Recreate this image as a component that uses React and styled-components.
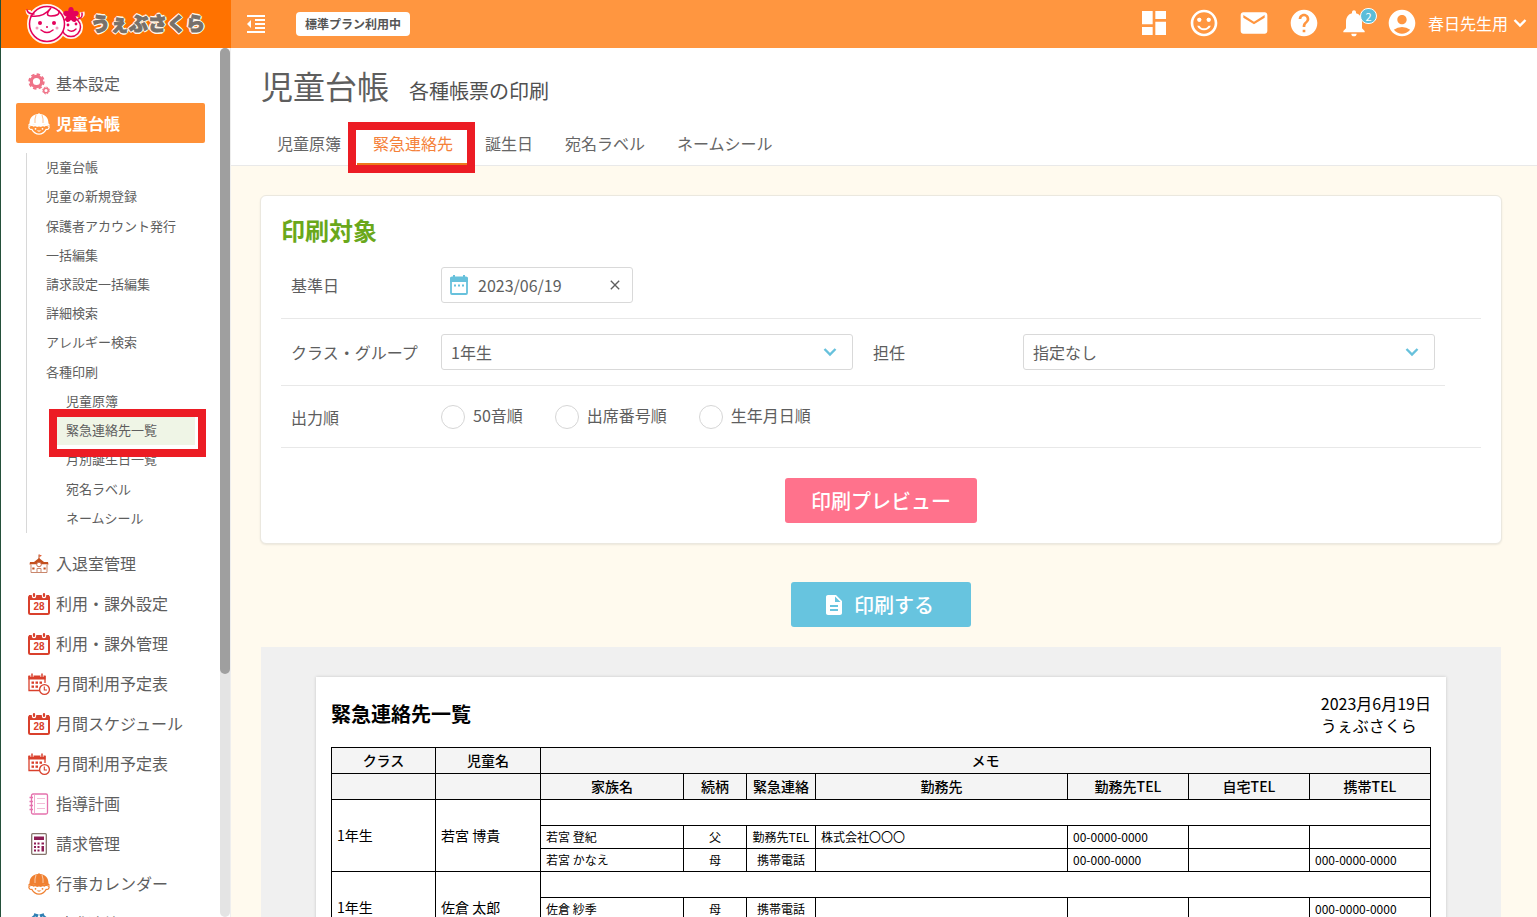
import React from "react";
import styled, { createGlobalStyle, css } from "styled-components";
import {
  MdDashboard,
  MdSentimentSatisfiedAlt,
  MdEmail,
  MdHelp,
  MdNotifications,
  MdAccountCircle,
  MdFormatIndentDecrease,
  MdDescription,
  MdClose,
} from "react-icons/md";

const GlobalStyle = createGlobalStyle`
  *, *::before, *::after { box-sizing: border-box; }
  body { margin: 0; background: #fffaee; }
  body, button, input, select {
    font-family: "Noto Sans CJK JP", "Noto Sans", sans-serif;
    color: #5e5e5e;
  }
  body { font-size: 16px; line-height: 24px; }
  h1, h2, h3, p, ul { margin: 0; padding: 0; }
  ul { list-style: none; }
  a { color: inherit; text-decoration: none; }
  button { border: 0; padding: 0; background: none; cursor: pointer; }
`;

/* ---------- shell ---------- */

const Shell = styled.div`
  display: grid;
  grid-template-columns: 230px minmax(0, 1fr);
  grid-template-rows: 48px minmax(0, 1fr);
  height: 100vh;
  overflow: hidden;
  border-left: 1px solid #24503a;
`;

const Brand = styled.a`
  display: flex;
  align-items: center;
  gap: 6px;
  padding: 0 0 2px 24px;
  background: #ff7200;
`;

const BrandName = styled.span`
  font-size: 19px;
  font-weight: 900;
  line-height: 24px;
  color: #77706a;
  white-space: nowrap;
  -webkit-text-stroke: 1px #77706a;
  text-shadow: 2px 0 #fff6e8, -2px 0 #fff6e8, 0 2px #fff6e8, 0 -2px #fff6e8,
    1px 1px #fff6e8, -1px 1px #fff6e8, 1px -1px #fff6e8, -1px -1px #fff6e8;
`;

const TopBar = styled.header`
  display: flex;
  align-items: center;
  padding: 0 10px 0 13px;
  background: #ff9640;
  color: #fff;
`;

const BarButton = styled.button`
  display: grid;
  place-items: center;
  position: relative;
  color: #fff;
  width: ${(p) => p.$width || 50}px;
  height: 46px;
`;

const PlanBadge = styled.span`
  margin-left: 28px;
  padding: 0 9px;
  border-radius: 4px;
  background: #fff;
  color: #555;
  font-size: 12px;
  font-weight: 700;
  line-height: 24px;
`;

const BarActions = styled.div`
  display: flex;
  align-items: center;
  margin-left: auto;
  padding-bottom: 2px;
`;

const Count = styled.span`
  position: absolute;
  top: 8px;
  right: 2px;
  width: 17px;
  height: 16px;
  border: 1px solid #fff;
  border-radius: 8px;
  background: #5bbdd9;
  font-size: 11px;
  line-height: 14px;
  text-align: center;
`;

const UserButton = styled.button`
  display: flex;
  align-items: center;
  gap: 5px;
  margin-left: 7px;
  color: #fff;
  font-size: 16px;
  line-height: 24px;
`;

const UserName = styled.span`
  padding-left: 5px;
`;

/* ---------- sidebar ---------- */

const Sidebar = styled.aside`
  display: flex;
  min-height: 0;
  border-right: 1px solid #eee;
  background: #fff;
`;

const Nav = styled.nav`
  flex: 1;
  overflow: hidden;
  padding: 15px 15px 0;
`;

const ScrollTrack = styled.div`
  width: 10px;
  border-radius: 5px;
  background: #e4e4e4;
`;

const ScrollThumb = styled.div`
  height: 72%;
  border-radius: 5px;
  background: #9f9f9f;
`;

const NavLink = styled.a`
  display: flex;
  align-items: center;
  gap: 6px;
  height: 40px;
  padding-left: 12px;
  border-radius: 2px;
  white-space: nowrap;
  ${(p) =>
    p.$active &&
    css`
      background: #ff9138;
      color: #fff;
      font-weight: 700;
    `}
  svg {
    flex: none;
    margin-top: 2px;
  }
`;

const SubMenu = styled.ul`
  display: grid;
  grid-auto-rows: 1fr;
  height: 380px;
  margin: 10px;
  border-left: 1px solid #d8d8d8;
`;

const SubItem = styled.li`
  position: relative;
  display: flex;
  align-items: center;
  margin-left: ${(p) => (p.$deep ? 29 : 19)}px;
  padding: 0 0 1px ${(p) => (p.$deep ? 10 : 0)}px;
  font-size: 13px;
  white-space: nowrap;
  background: ${(p) => (p.$current ? "#eff5e6" : "none")};
`;

const Marker = styled.span`
  position: absolute;
  z-index: 2;
  border: 8px solid #ec1c24;
  pointer-events: none;
  ${(p) =>
    p.$tab
      ? css`
          inset: 0 -6px -10px -9px;
        `
      : css`
          inset: -7px -11px -12px -7px;
          box-shadow: inset 0 -4px #fff, inset -3px 0 #fff;
        `}
`;

/* ---------- content ---------- */

const Content = styled.main`
  overflow: hidden;
  background: #fffaee;
`;

const PageHead = styled.div`
  padding: 13px 30px 0;
  border-bottom: 1px solid #e9e9e9;
  background: #fff;
`;

const TitleLine = styled.div`
  display: flex;
  align-items: baseline;
  gap: 20px;
`;

const Title = styled.h1`
  font-size: 32px;
  font-weight: 400;
  line-height: 48px;
`;

const Subtitle = styled.p`
  font-size: 20px;
  line-height: 32px;
  color: #505050;
`;

const Tabs = styled.nav`
  display: flex;
  margin-top: 13px;
`;

const Tab = styled.a`
  position: relative;
  padding: 9px 16px 8px;
  border-bottom: 2px solid ${(p) => (p.$active ? "#ec7a1c" : "transparent")};
  color: ${(p) => (p.$active ? "#f5813a" : "#666")};
`;

const Body = styled.div`
  display: flex;
  flex-direction: column;
  padding: 29px 35px 0 29px;
`;

const Card = styled.section`
  padding: 16px 20px 20px;
  border: 1px solid #ebe8df;
  border-radius: 6px;
  background: #fff;
  box-shadow: 0 1px 2px rgba(0, 0, 0, 0.08);
`;

const CardTitle = styled.h2`
  margin-bottom: 4px;
  color: #6aa81b;
  font-size: 24px;
  font-weight: 700;
  line-height: 36px;
`;

const FormRow = styled.div`
  display: flex;
  align-items: center;
  gap: 20px;
  min-height: ${(p) => (p.$short ? 62 : 67)}px;
  margin-right: ${(p) => (p.$inset ? 36 : 0)}px;
  padding: 0 10px;
  border-bottom: 1px solid #e8e8e8;
`;

const Field = styled.div`
  display: flex;
  align-items: center;
  flex: ${(p) => (p.$grow ? "1" : "none")};
`;

const FieldLabel = styled.label`
  width: 150px;
`;

const controlBox = css`
  height: 36px;
  border: 1px solid #d9d9d9;
  border-radius: 3px;
  background: #fff;
`;

const DateBox = styled.div`
  ${controlBox}
  display: flex;
  align-items: center;
  width: 192px;
  padding: 0 9px 0 7px;
`;

const DateInput = styled.input`
  flex: 1;
  min-width: 0;
  margin-left: 9px;
  padding: 0;
  border: 0;
  outline: 0;
  background: none;
  font-size: 16px;
  line-height: 24px;
`;

const ClearButton = styled.button`
  display: grid;
  place-items: center;
`;

const SelectBox = styled.div`
  position: relative;
  flex: 1;
  svg {
    position: absolute;
    top: 13px;
    right: 16px;
    pointer-events: none;
  }
`;

const Select = styled.select`
  ${controlBox}
  display: block;
  appearance: none;
  width: 100%;
  padding: 0 40px 0 9px;
  font-size: 16px;
`;

const RadioGroup = styled.div`
  display: flex;
  gap: 32px;
`;

const RadioLabel = styled.label`
  display: flex;
  align-items: center;
  gap: 8px;
  span {
    padding-bottom: 3px;
  }
`;

const Radio = styled.input`
  appearance: none;
  width: 24px;
  height: 24px;
  margin: 0;
  border: 1px solid #d6d6d6;
  border-radius: 50%;
  background: #fff;
  &:checked {
    border: 7px solid #66c3de;
  }
`;

const ActionButton = styled.button`
  display: flex;
  align-items: center;
  justify-content: center;
  gap: 8px;
  width: ${(p) => (p.$print ? 180 : 192)}px;
  height: 45px;
  margin: ${(p) => (p.$print ? "38px auto 20px" : "30px auto 0")};
  padding-right: ${(p) => (p.$print ? 6 : 0)}px;
  border-radius: 3px;
  background: ${(p) => (p.$print ? "#67c4df" : "#ff728c")};
  color: #fff;
  font-size: 20px;
  font-weight: 500;
  line-height: 30px;
`;

/* ---------- printed sheet ---------- */

const Preview = styled.section`
  margin: 0 1px;
  padding: 30px 55px;
  background: #f0f0f0;
`;

const Sheet = styled.article`
  padding: 15px 15px 40px;
  background: #fff;
  color: #000;
  box-shadow: 0 0 3px rgba(0, 0, 0, 0.18);
`;

const SheetHead = styled.div`
  display: flex;
  align-items: center;
  justify-content: space-between;
  margin-bottom: 11px;
  line-height: 22px;
`;

const SheetTitle = styled.h3`
  font-size: 20px;
  font-weight: 700;
  line-height: 30px;
`;

const Table = styled.table`
  width: 100%;
  table-layout: fixed;
  border-collapse: collapse;
  font-size: 14px;
  line-height: 20px;
`;

const Row = styled.tr`
  height: ${(p) => (p.$family ? 23 : 26)}px;
`;

const Th = styled.th`
  padding: 0 0 2px;
  border: 1px solid #000;
  background: #f4f4f4;
  font-weight: 500;
  white-space: nowrap;
`;

const Td = styled.td`
  padding: ${(p) => (p.$small ? "0 5px 1px" : "0 5px 2px")};
  border: 1px solid #000;
  font-size: ${(p) => (p.$small ? 12 : 14)}px;
  text-align: ${(p) => (p.$center ? "center" : "left")};
  white-space: nowrap;
`;

/* ---------- icons ---------- */

const LogoMark = () => (
  <svg width="60" height="44" viewBox="0 0 60 44" aria-hidden="true">
    <g stroke="#fff6ee" strokeWidth="5" strokeLinejoin="round" fill="#fff">
      <circle cx="22" cy="23" r="17.5" />
      <circle cx="46" cy="26" r="9.5" />
      <path d="M3 9 Q3 13 8 13 M55 15 Q58 15 57 11" />
    </g>
    <circle cx="46" cy="26" r="9.5" fill="#fff" stroke="#e4005a" strokeWidth="1.5" />
    <circle cx="22" cy="23" r="17.5" fill="#fff" stroke="#e4005a" strokeWidth="1.5" />
    <g fill="none" stroke="#e4005a" strokeWidth="1.5" strokeLinecap="round">
      <path d="M2 9 Q3 13 9 13" />
      <path d="M6 15 Q18 17 26 7 Q19 15 26 15 Q35 15 34 10" />
      <path d="M53 18 Q58 17 57 12" />
      <path d="M16 29 Q22 34 28 29" />
      <path d="M43 29 Q47 32 51 28" />
    </g>
    <g fill="#e4005a">
      <circle cx="15" cy="22" r="2" />
      <circle cx="29" cy="22" r="2" />
      <circle cx="43" cy="24" r="1.4" />
      <circle cx="51" cy="23" r="1.4" />
      <circle cx="22" cy="26" r="1" />
      <circle cx="12" cy="27" r="1.5" opacity=".4" />
      <circle cx="32" cy="27" r="1.5" opacity=".4" />
      {[0, 72, 144, 216, 288].map((a) => (
        <ellipse key={a} cx="46" cy="10" rx="2.8" ry="4" transform={`rotate(${a} 46 14)`} />
      ))}
    </g>
  </svg>
);

const Cogs = () => (
  <svg width="22" height="22" viewBox="0 0 22 22" fill="none" stroke="#ef7388" aria-hidden="true">
    <circle cx="8.5" cy="8.5" r="5.2" strokeWidth="3.2" />
    <circle cx="8.5" cy="8.5" r="7.2" strokeWidth="2" strokeDasharray="3.4 2.25" />
    <circle cx="18" cy="17.5" r="2.3" strokeWidth="1.5" />
    <circle cx="18" cy="17.5" r="3.4" strokeWidth="1" strokeDasharray="1.6 1.07" />
  </svg>
);

const Child = ({ color, back = "#fff" }) => (
  <svg width="22" height="22" viewBox="0 0 22 22" aria-hidden="true">
    <path d="M3.5 12.5 Q0 13 1.2 15.3 Q2 16.8 3.8 16.4 Q6.5 21 11 21.2 Q15.5 21 18.2 16.4 Q20 16.8 20.8 15.3 Q22 13 18.5 12.5Z" fill={back} stroke={color} strokeWidth="1.2" />
    <path d="M1.5 10.5 C1.5 4 5.5 1.5 10 1 L11 0 L12 1 C16.5 1.5 20.5 4 20.5 10.5 Q21.8 11 21.8 12.8 Q11 9.5 .2 12.8 Q.2 11 1.5 10.5Z" fill={color} />
    <path d="M8 2 Q6.5 6 7 10 M14 2 Q15.5 6 15 10" stroke={back} strokeWidth=".6" fill="none" />
    <path d="M4 12 Q11 9.5 18 12 L17 13.8 Q14.5 12.4 13 14 Q11 13 9 14 Q7.5 12.4 5 13.8Z" fill={color} />
    <circle cx="7.5" cy="15.8" r=".9" fill={color} />
    <circle cx="14.5" cy="15.8" r=".9" fill={color} />
    <path d="M8.5 17.5 Q11 19.8 13.5 17.5Z" fill={color} />
  </svg>
);

const School = () => (
  <svg width="22" height="22" viewBox="0 0 22 22" aria-hidden="true">
    <path d="M11 1.5 V6" stroke="#b5522b" strokeWidth="1" />
    <path d="M11.3 1.5 L14 2.7 L11.3 4Z" fill="#e0562c" />
    <path d="M11 5 L16 9 H20 L20.5 11.5 H1.5 L2 9 H6Z" fill="#c4501f" />
    <path d="M3 11.5 V19.5 H19 V11.5" fill="#fff" stroke="#c9876d" strokeWidth="1" />
    <circle cx="11" cy="11.5" r="2.3" fill="#fff" stroke="#c9694a" />
    <path d="M9 19 V15.5 H13 V19" fill="#fff" stroke="#c9876d" />
    <path d="M4.3 14.5 H6.5 V16.5 H4.3Z M15.5 14.5 H17.7 V16.5 H15.5Z" fill="#c4501f" />
  </svg>
);

const Calendar28 = () => (
  <svg width="22" height="24" viewBox="0 0 22 24" aria-hidden="true">
    <rect x="1" y="4" width="20" height="18" rx="1.5" fill="#fff" stroke="#d9402c" strokeWidth="2" />
    <path d="M1 3 H21 V8 H1Z" fill="#d9402c" />
    <g stroke="#fff" strokeWidth="4.4" strokeLinecap="round">
      <path d="M6 2 V4 M16 2 V4" />
    </g>
    <g stroke="#d9402c" strokeWidth="2.2" strokeLinecap="round">
      <path d="M6 2 V4 M16 2 V4" />
    </g>
    <text x="11" y="18" textAnchor="middle" fontFamily="Liberation Sans, sans-serif" fontSize="10" fontWeight="700" fill="#d9402c">
      28
    </text>
  </svg>
);

const CalendarClock = () => (
  <svg width="22" height="24" viewBox="0 0 22 24" aria-hidden="true">
    <path d="M12 18.5 H1 V4 M17 4 V11" fill="none" stroke="#d9402c" strokeWidth="1.3" />
    <path d="M.4 3.5 H17.6 V7.5 H.4Z" fill="#d9402c" />
    <path d="M4 1.5 V5 M14 1.5 V5" stroke="#fff" strokeWidth="3" />
    <path d="M4 1.5 V5 M14 1.5 V5" stroke="#d9402c" strokeWidth="1.5" />
    <g fill="#d9402c">
      {[3.5, 7.5, 11.5].map((x) => (
        <rect key={x} x={x} y="9.5" width="2.5" height="2.3" />
      ))}
      {[3.5, 7.5].map((x) => (
        <rect key={x} x={x} y="13.5" width="2.5" height="2.3" />
      ))}
    </g>
    <circle cx="16.5" cy="17.5" r="4.9" fill="#fff" stroke="#d9402c" strokeWidth="1.3" />
    <path d="M16.3 14.5 V18 H19" fill="none" stroke="#d9402c" strokeWidth="1.1" />
  </svg>
);

const Notebook = () => (
  <svg width="22" height="22" viewBox="0 0 22 22" fill="none" aria-hidden="true">
    <rect x="3.5" y="1" width="16" height="20" rx="1.5" stroke="#e571ad" strokeWidth="1.3" />
    <path d="M6.5 1.5 V20.5" stroke="#f0a8cd" />
    <path d="M1.5 4.5 H5 M1.5 8.5 H5 M1.5 12.5 H5 M1.5 16.5 H5" stroke="#e571ad" strokeWidth="1.3" />
    <path d="M9 5.5 H17 M9 10.5 H17 M9 15.5 H17" stroke="#f3bdd8" />
  </svg>
);

const Calculator = () => (
  <svg width="22" height="22" viewBox="0 0 22 22" aria-hidden="true">
    <rect x="3.7" y=".7" width="14.6" height="20.6" rx="1" fill="#fff" stroke="#85746c" strokeWidth="1.3" />
    <rect x="6" y="3.5" width="10" height="3.5" fill="#8d1d55" />
    <g fill="#8d1d55">
      {[9.5, 13, 16.5].map((y) =>
        [6, 9.5].map((x) => <rect key={`${x}-${y}`} x={x} y={y} width="2" height="2" />)
      )}
      <rect x="13.5" y="9.5" width="2.5" height="2" />
      <rect x="13.5" y="13" width="2.5" height="5.5" />
    </g>
  </svg>
);

const BlueCycle = () => (
  <svg width="22" height="22" viewBox="0 0 22 22" fill="none" stroke="#2f7fb3" strokeWidth="1.8" aria-hidden="true">
    <path d="M9 2 A9.5 9.5 0 0 0 1.5 11 A9.5 9.5 0 0 0 9 20 M13 2 A9.5 9.5 0 0 1 20.5 11 A9.5 9.5 0 0 1 13 20" />
    <path d="M6 1 L9.5 2 L8 5.5 M16 1 L12.5 2 L14 5.5" />
  </svg>
);

const DateIcon = () => (
  <svg width="20" height="22" viewBox="0 0 20 22" aria-hidden="true">
    <rect x="2" y="3.5" width="16" height="16.5" rx="1" fill="#fff" stroke="#67c1dc" strokeWidth="1.8" />
    <path d="M1.1 3.5 H18.9 V8 H1.1Z M4 1 H6 V4 H4Z M14 1 H16 V4 H14Z" fill="#67c1dc" />
    <path d="M5 10.5 H7 V12.5 H5Z M9 10.5 H11 V12.5 H9Z M13 10.5 H15 V12.5 H13Z" fill="#67c1dc" />
  </svg>
);

const Chevron = ({ color }) => (
  <svg width="14" height="10" viewBox="0 0 14 10" fill="none" aria-hidden="true">
    <path d="M1.5 2 L7 7.5 L12.5 2" stroke={color} strokeWidth="2.4" />
  </svg>
);

/* ---------- data ---------- */

const subItems = [
  { text: "児童台帳" },
  { text: "児童の新規登録" },
  { text: "保護者アカウント発行" },
  { text: "一括編集" },
  { text: "請求設定一括編集" },
  { text: "詳細検索" },
  { text: "アレルギー検索" },
  { text: "各種印刷" },
  { text: "児童原簿", deep: true },
  { text: "緊急連絡先一覧", deep: true, current: true },
  { text: "月別誕生日一覧", deep: true },
  { text: "宛名ラベル", deep: true },
  { text: "ネームシール", deep: true },
];

const lowerItems = [
  { text: "入退室管理", icon: <School /> },
  { text: "利用・課外設定", icon: <Calendar28 /> },
  { text: "利用・課外管理", icon: <Calendar28 /> },
  { text: "月間利用予定表", icon: <CalendarClock /> },
  { text: "月間スケジュール", icon: <Calendar28 /> },
  { text: "月間利用予定表", icon: <CalendarClock /> },
  { text: "指導計画", icon: <Notebook /> },
  { text: "請求管理", icon: <Calculator /> },
  { text: "行事カレンダー", icon: <Child color="#f08030" /> },
  { text: "請求連絡", icon: <BlueCycle /> },
];

const tabs = ["児童原簿", "緊急連絡先", "誕生日", "宛名ラベル", "ネームシール"];
const orders = ["50音順", "出席番号順", "生年月日順"];
const columnWidths = [104, 105, 143, 63, 69, 252, 121, 121, 121];
const familyHeads = ["家族名", "続柄", "緊急連絡", "勤務先", "勤務先TEL", "自宅TEL", "携帯TEL"];

const children = [
  {
    grade: "1年生",
    name: "若宮 博貴",
    family: [
      ["若宮 登紀", "父", "勤務先TEL", "株式会社〇〇〇", "00-0000-0000", "", ""],
      ["若宮 かなえ", "母", "携帯電話", "", "00-000-0000", "", "000-0000-0000"],
    ],
  },
  {
    grade: "1年生",
    name: "佐倉 太郎",
    family: [
      ["佐倉 紗季", "母", "携帯電話", "", "", "", "000-0000-0000"],
      ["", "", "", "", "", "", ""],
    ],
  },
];

function SideNavigation() {
  return (
    <Sidebar>
      <Nav aria-label="メニュー">
        <NavLink href="#settings">
          <Cogs />
          基本設定
        </NavLink>
        <NavLink href="#children" $active>
          <Child color="#fff" back="#ff9138" />
          児童台帳
        </NavLink>
        <SubMenu>
          {subItems.map((item) => (
            <SubItem key={item.text} $deep={item.deep} $current={item.current}>
              <a href="#sub">{item.text}</a>
              {item.current && <Marker />}
            </SubItem>
          ))}
        </SubMenu>
        {lowerItems.map((item, i) => (
          <NavLink key={i} href="#menu">
            {item.icon}
            {item.text}
          </NavLink>
        ))}
      </Nav>
      <ScrollTrack>
        <ScrollThumb />
      </ScrollTrack>
    </Sidebar>
  );
}

function TargetForm() {
  return (
    <Card>
      <CardTitle>印刷対象</CardTitle>
      <FormRow>
        <Field>
          <FieldLabel htmlFor="base-date">基準日</FieldLabel>
          <DateBox>
            <DateIcon />
            <DateInput id="base-date" type="text" defaultValue="2023/06/19" />
            <ClearButton type="button" aria-label="日付をクリア">
              <MdClose size={16} />
            </ClearButton>
          </DateBox>
        </Field>
      </FormRow>
      <FormRow $inset>
        <Field $grow>
          <FieldLabel htmlFor="class">クラス・グループ</FieldLabel>
          <SelectBox>
            <Select id="class">
              <option>1年生</option>
            </Select>
            <Chevron color="#67c1dc" />
          </SelectBox>
        </Field>
        <Field $grow>
          <FieldLabel htmlFor="teacher">担任</FieldLabel>
          <SelectBox>
            <Select id="teacher">
              <option>指定なし</option>
            </Select>
            <Chevron color="#67c1dc" />
          </SelectBox>
        </Field>
      </FormRow>
      <FormRow $short>
        <Field role="radiogroup" aria-labelledby="order-label">
          <FieldLabel as="span" id="order-label">
            出力順
          </FieldLabel>
          <RadioGroup>
            {orders.map((order) => (
              <RadioLabel key={order}>
                <Radio type="radio" name="order" />
                <span>{order}</span>
              </RadioLabel>
            ))}
          </RadioGroup>
        </Field>
      </FormRow>
      <ActionButton type="button">印刷プレビュー</ActionButton>
    </Card>
  );
}

function ContactSheet() {
  return (
    <Preview>
      <Sheet>
        <SheetHead>
          <SheetTitle>緊急連絡先一覧</SheetTitle>
          <div>
            <p>2023月6月19日</p>
            <p>うぇぶさくら</p>
          </div>
        </SheetHead>
        <Table>
          <colgroup>
            {columnWidths.map((w, i) => (
              <col key={i} width={w} />
            ))}
          </colgroup>
          <thead>
            <Row>
              <Th>クラス</Th>
              <Th>児童名</Th>
              <Th colSpan={7}>メモ</Th>
            </Row>
            <Row>
              <Th />
              <Th />
              {familyHeads.map((head) => (
                <Th key={head}>{head}</Th>
              ))}
            </Row>
          </thead>
          {children.map((child) => (
            <tbody key={child.name}>
              <Row>
                <Td rowSpan={3}>{child.grade}</Td>
                <Td rowSpan={3}>{child.name}</Td>
                <Td colSpan={7} />
              </Row>
              {child.family.map((cells, r) => (
                <Row key={r} $family>
                  {cells.map((cell, c) => (
                    <Td key={c} $small $center={c === 1 || c === 2}>
                      {cell}
                    </Td>
                  ))}
                </Row>
              ))}
            </tbody>
          ))}
        </Table>
      </Sheet>
    </Preview>
  );
}

export default function App() {
  return (
    <>
      <GlobalStyle />
      <Shell>
        <Brand href="#home">
          <LogoMark />
          <BrandName>うぇぶさくら</BrandName>
        </Brand>
        <TopBar>
          <BarButton $width={24} type="button" aria-label="メニューを閉じる">
            <MdFormatIndentDecrease size={24} />
          </BarButton>
          <PlanBadge>標準プラン利用中</PlanBadge>
          <BarActions>
            <BarButton type="button" aria-label="ダッシュボード">
              <MdDashboard size={32} />
            </BarButton>
            <BarButton type="button" aria-label="スタンプ">
              <MdSentimentSatisfiedAlt size={32} />
            </BarButton>
            <BarButton type="button" aria-label="メール">
              <MdEmail size={32} />
            </BarButton>
            <BarButton type="button" aria-label="ヘルプ">
              <MdHelp size={32} />
            </BarButton>
            <BarButton type="button" aria-label="お知らせ">
              <MdNotifications size={32} />
              <Count>2</Count>
            </BarButton>
            <UserButton type="button">
              <MdAccountCircle size={32} />
              <UserName>春日先生用</UserName>
              <Chevron color="#fff" />
            </UserButton>
          </BarActions>
        </TopBar>
        <SideNavigation />
        <Content>
          <PageHead>
            <TitleLine>
              <Title>児童台帳</Title>
              <Subtitle>各種帳票の印刷</Subtitle>
            </TitleLine>
            <Tabs>
              {tabs.map((tab, i) => (
                <Tab key={tab} href="#tab" $active={i === 1}>
                  {tab}
                  {i === 1 && <Marker $tab />}
                </Tab>
              ))}
            </Tabs>
          </PageHead>
          <Body>
            <TargetForm />
            <ActionButton type="button" $print>
              <MdDescription size={24} />
              印刷する
            </ActionButton>
            <ContactSheet />
          </Body>
        </Content>
      </Shell>
    </>
  );
}
